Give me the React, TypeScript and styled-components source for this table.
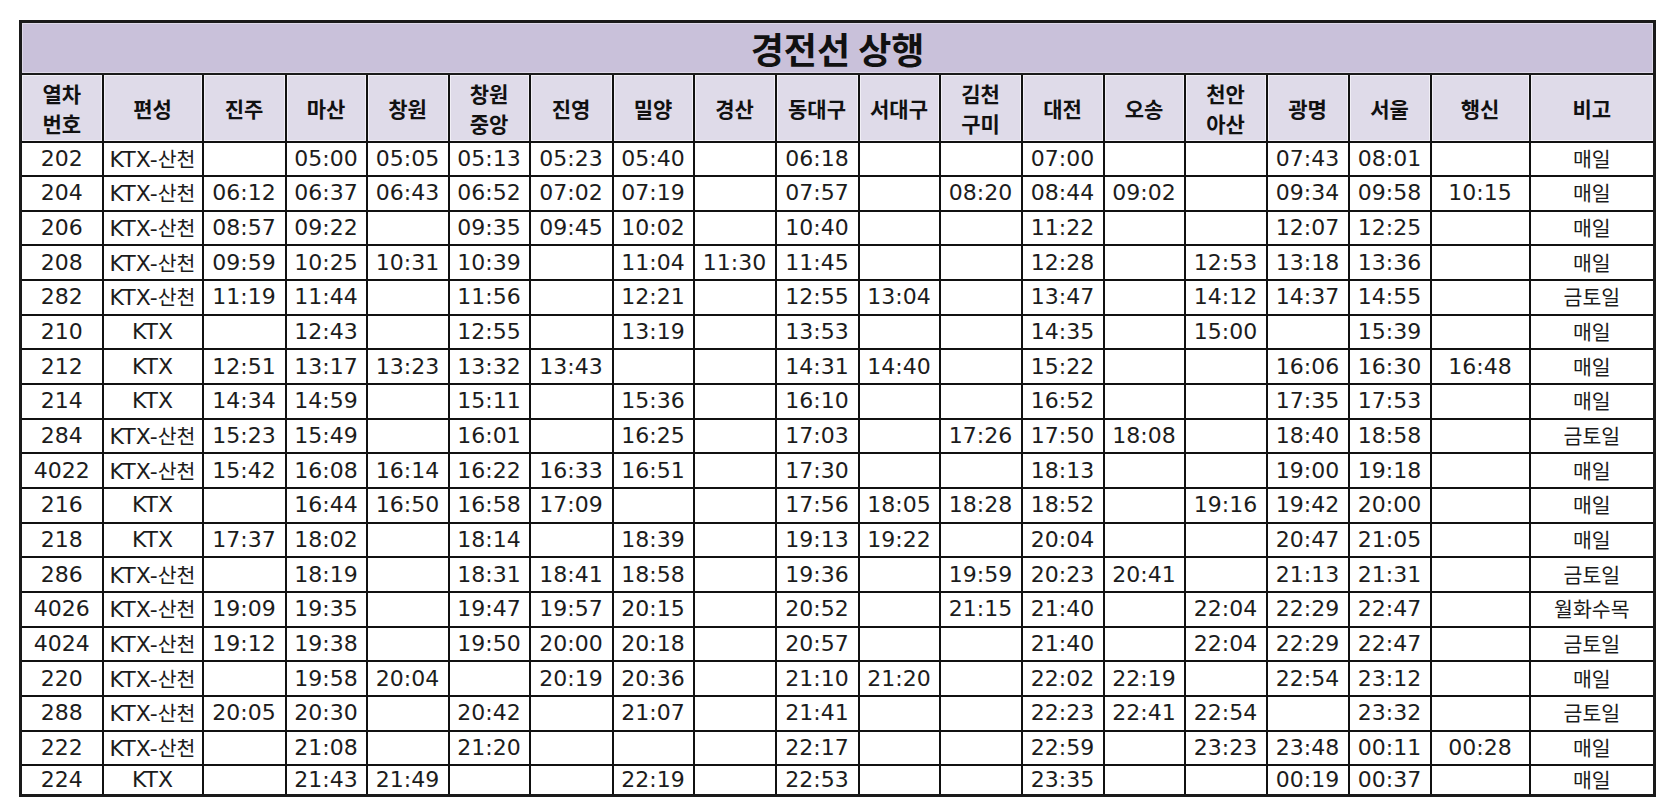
import React from "react";
import styled, { createGlobalStyle } from "styled-components";

const GlobalStyle = createGlobalStyle`
  html, body { margin: 0; padding: 0; background: #ffffff; }
  body { font-family: "DejaVu Sans", "Noto Sans CJK KR", sans-serif; }
`;

const Wrapper = styled.div`
  padding: 20px 0 0 19px;
`;

const Table = styled.table`
  border-collapse: collapse;
  table-layout: fixed;
  width: 1634px;
  border: 3px solid #1a1a1a;
`;

const Row = styled.tr<{ $h: number }>`
  height: ${(p) => p.$h}px;
`;

const TitleCell = styled.th`
  background: #c9c1da;
  border: 2px solid #1a1a1a;
  box-shadow: inset 0 0 0 1px #ddd8e8;
  font-family: "Noto Sans CJK KR", sans-serif;
  font-weight: 700;
  font-size: 36px;
  line-height: 42px;
  color: #111111;
  text-align: center;
  padding: 0;
`;

const HeadCell = styled.th`
  background: #dfdbe9;
  border: 2px solid #111111;
  box-shadow: inset 0 0 0 1px #f1eff6;
  font-family: "Noto Sans CJK KR", sans-serif;
  font-weight: 700;
  font-size: 21px;
  line-height: 30px;
  color: #111111;
  text-align: center;
  vertical-align: middle;
  padding: 0;
`;

const HeadLine = styled.div`
  display: block;
  height: 30px;
`;

const Cell = styled.td`
  border: 2px solid #111111;
  font-family: "DejaVu Sans", "Noto Sans CJK KR", sans-serif;
  font-size: 22px;
  line-height: 26px;
  color: #1c1c1c;
  text-align: center;
  vertical-align: middle;
  padding: 0;
  white-space: nowrap;
  overflow: hidden;
`;

const Hangul = styled.span`
  font-family: "Noto Sans CJK KR", sans-serif;
  font-size: 20.5px;
`;

const Col = styled.col<{ $w: number }>`
  width: ${(p) => p.$w}px;
`;

const widths = [82, 100, 83, 81, 82, 81, 83, 81, 82, 83, 81, 82, 82, 81, 82, 82, 82, 99, 125];

const headers: string[][] = [
  ["열차", "번호"],
  ["편성"],
  ["진주"],
  ["마산"],
  ["창원"],
  ["창원", "중앙"],
  ["진영"],
  ["밀양"],
  ["경산"],
  ["동대구"],
  ["서대구"],
  ["김천", "구미"],
  ["대전"],
  ["오송"],
  ["천안", "아산"],
  ["광명"],
  ["서울"],
  ["행신"],
  ["비고"],
];

const S = "KTX-산천";
const K = "KTX";
const E = "";

const rows: string[][] = [
  ["202", S, E, "05:00", "05:05", "05:13", "05:23", "05:40", E, "06:18", E, E, "07:00", E, E, "07:43", "08:01", E, "매일"],
  ["204", S, "06:12", "06:37", "06:43", "06:52", "07:02", "07:19", E, "07:57", E, "08:20", "08:44", "09:02", E, "09:34", "09:58", "10:15", "매일"],
  ["206", S, "08:57", "09:22", E, "09:35", "09:45", "10:02", E, "10:40", E, E, "11:22", E, E, "12:07", "12:25", E, "매일"],
  ["208", S, "09:59", "10:25", "10:31", "10:39", E, "11:04", "11:30", "11:45", E, E, "12:28", E, "12:53", "13:18", "13:36", E, "매일"],
  ["282", S, "11:19", "11:44", E, "11:56", E, "12:21", E, "12:55", "13:04", E, "13:47", E, "14:12", "14:37", "14:55", E, "금토일"],
  ["210", K, E, "12:43", E, "12:55", E, "13:19", E, "13:53", E, E, "14:35", E, "15:00", E, "15:39", E, "매일"],
  ["212", K, "12:51", "13:17", "13:23", "13:32", "13:43", E, E, "14:31", "14:40", E, "15:22", E, E, "16:06", "16:30", "16:48", "매일"],
  ["214", K, "14:34", "14:59", E, "15:11", E, "15:36", E, "16:10", E, E, "16:52", E, E, "17:35", "17:53", E, "매일"],
  ["284", S, "15:23", "15:49", E, "16:01", E, "16:25", E, "17:03", E, "17:26", "17:50", "18:08", E, "18:40", "18:58", E, "금토일"],
  ["4022", S, "15:42", "16:08", "16:14", "16:22", "16:33", "16:51", E, "17:30", E, E, "18:13", E, E, "19:00", "19:18", E, "매일"],
  ["216", K, E, "16:44", "16:50", "16:58", "17:09", E, E, "17:56", "18:05", "18:28", "18:52", E, "19:16", "19:42", "20:00", E, "매일"],
  ["218", K, "17:37", "18:02", E, "18:14", E, "18:39", E, "19:13", "19:22", E, "20:04", E, E, "20:47", "21:05", E, "매일"],
  ["286", S, E, "18:19", E, "18:31", "18:41", "18:58", E, "19:36", E, "19:59", "20:23", "20:41", E, "21:13", "21:31", E, "금토일"],
  ["4026", S, "19:09", "19:35", E, "19:47", "19:57", "20:15", E, "20:52", E, "21:15", "21:40", E, "22:04", "22:29", "22:47", E, "월화수목"],
  ["4024", S, "19:12", "19:38", E, "19:50", "20:00", "20:18", E, "20:57", E, E, "21:40", E, "22:04", "22:29", "22:47", E, "금토일"],
  ["220", S, E, "19:58", "20:04", E, "20:19", "20:36", E, "21:10", "21:20", E, "22:02", "22:19", E, "22:54", "23:12", E, "매일"],
  ["288", S, "20:05", "20:30", E, "20:42", E, "21:07", E, "21:41", E, E, "22:23", "22:41", "22:54", E, "23:32", E, "금토일"],
  ["222", S, E, "21:08", E, "21:20", E, E, E, "22:17", E, E, "22:59", E, "23:23", "23:48", "00:11", "00:28", "매일"],
  ["224", K, E, "21:43", "21:49", E, E, "22:19", E, "22:53", E, E, "23:35", E, E, "00:19", "00:37", E, "매일"],
];

function renderText(s: string) {
  const parts = s.split(/([\uAC00-\uD7A3]+)/).filter((p) => p.length > 0);
  return parts.map((p, i) =>
    /[\uAC00-\uD7A3]/.test(p) ? <Hangul key={i}>{p}</Hangul> : <React.Fragment key={i}>{p}</React.Fragment>
  );
}

export default function App() {
  return (
    <>
      <GlobalStyle />
      <Wrapper>
        <Table>
          <colgroup>
            {widths.map((w, i) => (
              <Col key={i} $w={w} />
            ))}
          </colgroup>
          <thead>
            <Row $h={52}>
              <TitleCell colSpan={19}>경전선 상행</TitleCell>
            </Row>
            <Row $h={68}>
              {headers.map((h, i) => (
                <HeadCell key={i}>
                  {h.map((line, j) => (
                    <HeadLine key={j}>{line}</HeadLine>
                  ))}
                </HeadCell>
              ))}
            </Row>
          </thead>
          <tbody>
            {rows.map((r, i) => (
              <Row key={i} $h={i === rows.length - 1 ? 29 : 34.67}>
                {r.map((c, j) => (
                  <Cell key={j}>{renderText(c)}</Cell>
                ))}
              </Row>
            ))}
          </tbody>
        </Table>
      </Wrapper>
    </>
  );
}
